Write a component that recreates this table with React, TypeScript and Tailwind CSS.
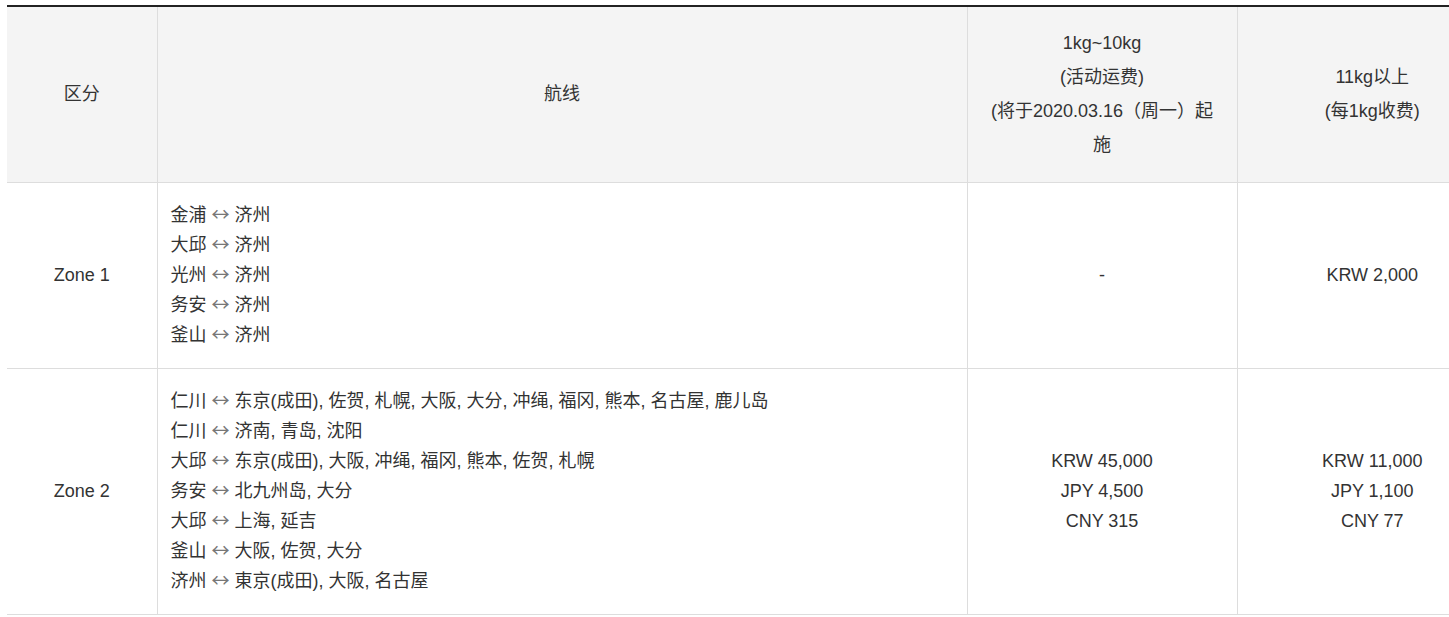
export default function App() {
  const zone1 = ["金浦 ↔ 济州", "大邱 ↔ 济州", "光州 ↔ 济州", "务安 ↔ 济州", "釜山 ↔ 济州"];
  const zone2 = [
    "仁川 ↔ 东京(成田), 佐贺, 札幌, 大阪, 大分, 冲绳, 福冈, 熊本, 名古屋, 鹿儿岛",
    "仁川 ↔ 济南, 青岛, 沈阳",
    "大邱 ↔ 东京(成田), 大阪, 冲绳, 福冈, 熊本, 佐贺, 札幌",
    "务安 ↔ 北九州岛, 大分",
    "大邱 ↔ 上海, 延吉",
    "釜山 ↔ 大阪, 佐贺, 大分",
    "济州 ↔ 東京(成田), 大阪, 名古屋",
  ];
  const render = (s: string) => {
    const [a, b] = s.split(" ↔ ");
    return (
      <>
        {a}{" "}
        <span
          className="text-[#777] leading-none"
          style={{ fontFamily: '"Noto Sans CJK SC", sans-serif' }}
        >
          ↔
        </span>{" "}
        {b}
      </>
    );
  };
  return (
    <div
      className="w-[1449px] h-[617px] overflow-hidden bg-white pt-[5px] pl-[7px] text-[#333] text-[18px] tracking-[0px]"
      style={{ fontFamily: '"Liberation Sans", "Noto Sans CJK SC", sans-serif' }}
    >
      <table className="w-[1500px] border-collapse border-t-2 border-[#222] table-fixed">
        <colgroup>
          <col className="w-[150px]" />
          <col className="w-[810px]" />
          <col className="w-[270px]" />
          <col className="w-[270px]" />
        </colgroup>
        <thead>
          <tr className="bg-[#f4f4f4] h-[176px] leading-[34px] text-center">
            <th className="font-normal border-b border-[#ddd] px-5">区分</th>
            <th className="font-normal border-b border-l border-[#ddd] px-5">航线</th>
            <th className="font-normal border-b border-l border-[#ddd] px-1">
              1kg~10kg
              <br />
              (活动运费)
              <br />
              (将于2020.03.16（周一）起
              <br />施
            </th>
            <th className="font-normal border-b border-l border-[#ddd] px-5">
              11kg以上
              <br />
              (每1kg收费)
            </th>
          </tr>
        </thead>
        <tbody className="leading-[30px]">
          <tr className="h-[186px]">
            <td className="border-b border-[#ddd] text-center">Zone 1</td>
            <td className="border-b border-l border-[#ddd] pl-[13px] py-[17px]">
              {zone1.map((s) => (
                <div key={s} className="h-[30px]">{render(s)}</div>
              ))}
            </td>
            <td className="border-b border-l border-[#ddd] text-center">-</td>
            <td className="border-b border-l border-[#ddd] text-center">KRW 2,000</td>
          </tr>
          <tr className="h-[246px]">
            <td className="border-b border-[#ddd] text-center">Zone 2</td>
            <td className="border-b border-l border-[#ddd] pl-[13px] py-[17px]">
              {zone2.map((s) => (
                <div key={s} className="h-[30px]">{render(s)}</div>
              ))}
            </td>
            <td className="border-b border-l border-[#ddd] text-center">
              KRW 45,000
              <br />
              JPY 4,500
              <br />
              CNY 315
            </td>
            <td className="border-b border-l border-[#ddd] text-center">
              KRW 11,000
              <br />
              JPY 1,100
              <br />
              CNY 77
            </td>
          </tr>
        </tbody>
      </table>
    </div>
  );
}
